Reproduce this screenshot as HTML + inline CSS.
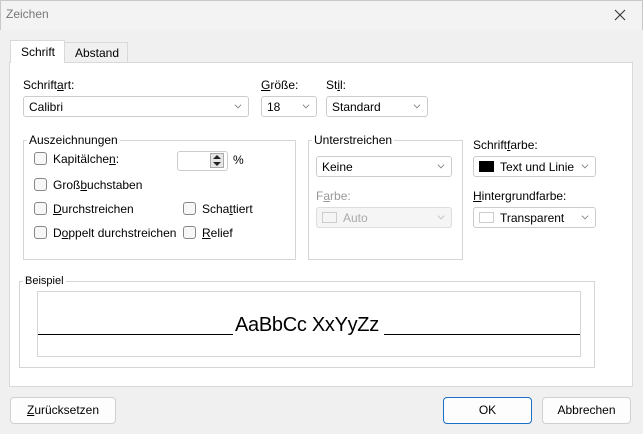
<!DOCTYPE html>
<html><head><meta charset="utf-8"><style>
*{box-sizing:border-box;margin:0;padding:0}
body{width:643px;height:434px;background:#f0f0f0;font-family:"Liberation Sans",sans-serif;font-size:12px;color:#000;position:relative;overflow:hidden}
.a{position:absolute}
.title{left:0;top:0;width:643px;height:30px;background:#f3f3f3;border:1px solid #c8c8c8;border-bottom:none}
.combo{position:absolute;height:21px;background:#fff;border:1px solid #ccc;border-radius:3px;padding:3px 0 0 5px;white-space:nowrap}
.combo .ch{position:absolute;right:7px;top:5px;width:6px;height:6px;border-right:1px solid #777;border-bottom:1px solid #777;transform:rotate(45deg) scale(.8)}
.cb{position:absolute;width:13px;height:13px;border:1px solid #888;border-radius:3px;background:#f7f7f7}
.grp{position:absolute;border:1px solid #d5d5d5}
.grp>span{position:absolute;top:-8px;left:3px;background:#fff;padding:0 2px}
u{text-decoration:underline}
.btn{position:absolute;height:27px;background:#fdfdfd;border:1px solid #d0d0d0;border-radius:4px;text-align:center;line-height:25px}
.sw{display:inline-block;width:15px;height:11px;vertical-align:-1px;margin-right:6px}
</style></head><body>
<div class="a title"></div>
<div class="a" style="left:6px;top:7px;color:#777">Zeichen</div>
<svg class="a" style="left:614px;top:9px" width="12" height="12"><path d="M1 1L11 11M11 1L1 11" stroke="#333" stroke-width="1.1"/></svg>
<div class="a" style="left:9px;top:62px;width:624px;height:325px;background:#fff;border:1px solid #d9d9d9"></div>
<div class="a" style="left:64px;top:42px;width:64px;height:21px;background:#f0f0f0;border:1px solid #d9d9d9;padding:3px 0 0 10px">Abstand</div>
<div class="a" style="left:10px;top:40px;width:55px;height:23px;background:#fff;border:1px solid #d9d9d9;border-bottom:none;padding:4px 0 0 10px">Schrift</div>

<div class="a" style="left:23px;top:78px">Schrift<u>a</u>rt:</div>
<div class="combo" style="left:23px;top:96px;width:226px">Calibri<i class="ch"></i></div>
<div class="a" style="left:261px;top:78px"><u>G</u>röße:</div>
<div class="combo" style="left:261px;top:96px;width:56px">18<i class="ch"></i></div>
<div class="a" style="left:326px;top:78px">St<u>i</u>l:</div>
<div class="combo" style="left:326px;top:96px;width:102px">Standard<i class="ch"></i></div>

<div class="grp" style="left:23px;top:140px;width:273px;height:120px"><span>Auszeichnungen</span></div>
<div class="cb" style="left:34px;top:152px"></div><div class="a" style="left:53px;top:152px">Kapitälche<u>n</u>:</div>
<div class="a" style="left:177px;top:151px;width:51px;height:20px;border:1px solid #ccc;border-radius:3px"></div>
<svg class="a" style="left:210px;top:153px" width="14" height="15"><rect x="0.5" y="0.5" width="13" height="14" fill="#e6e6e6" stroke="#aaa"/><path d="M3 6L7 2L11 6ZM3 9L7 13L11 9Z" fill="#222"/></svg>
<div class="a" style="left:233px;top:153px">%</div>
<div class="cb" style="left:34px;top:178px"></div><div class="a" style="left:53px;top:178px">Groß<u>b</u>uchstaben</div>
<div class="cb" style="left:34px;top:202px"></div><div class="a" style="left:53px;top:202px"><u>D</u>urchstreichen</div>
<div class="cb" style="left:34px;top:226px"></div><div class="a" style="left:53px;top:226px">D<u>o</u>ppelt durchstreichen</div>
<div class="cb" style="left:183px;top:202px"></div><div class="a" style="left:202px;top:202px">Scha<u>t</u>tiert</div>
<div class="cb" style="left:183px;top:226px"></div><div class="a" style="left:202px;top:226px"><u>R</u>elief</div>

<div class="grp" style="left:308px;top:140px;width:155px;height:120px"><span>Unterstreichen</span></div>
<div class="combo" style="left:316px;top:156px;width:136px">Keine<i class="ch"></i></div>
<div class="a" style="left:316px;top:189px;color:#999">F<u>a</u>rbe:</div>
<div class="combo" style="left:316px;top:207px;width:136px;background:#f5f5f5;color:#aaa;border-color:#ddd"><span class="sw" style="border:1px solid #ccc"></span>Auto<i class="ch" style="border-color:#bbb"></i></div>

<div class="a" style="left:473px;top:138px">Schrift<u>f</u>arbe:</div>
<div class="combo" style="left:473px;top:156px;width:123px"><span class="sw" style="background:#000"></span>Text und Linie<i class="ch"></i></div>
<div class="a" style="left:473px;top:189px"><u>H</u>intergrundfarbe:</div>
<div class="combo" style="left:473px;top:207px;width:123px"><span class="sw" style="border:1px solid #ccc"></span>Transparent<i class="ch"></i></div>

<div class="grp" style="left:19px;top:281px;width:576px;height:87px"><span style="font-size:11px;top:-7px">Beispiel</span></div>
<div class="a" style="left:37px;top:291px;width:544px;height:66px;border:1px solid #d5d5d5"></div>
<div class="a" style="left:38px;top:334px;width:195px;height:1px;background:#000"></div>
<div class="a" style="left:384px;top:334px;width:196px;height:1px;background:#000"></div>
<div class="a" style="left:235px;top:314px;font-size:20px;white-space:nowrap;letter-spacing:-0.3px">AaBbCc XxYyZz</div>

<div class="btn" style="left:10px;top:397px;width:106px"><u>Z</u>urücksetzen</div>
<div class="btn" style="left:443px;top:397px;width:89px;border-color:#1a6fc7">OK</div>
<div class="btn" style="left:542px;top:397px;width:89px">Abbrechen</div>
</body></html>
